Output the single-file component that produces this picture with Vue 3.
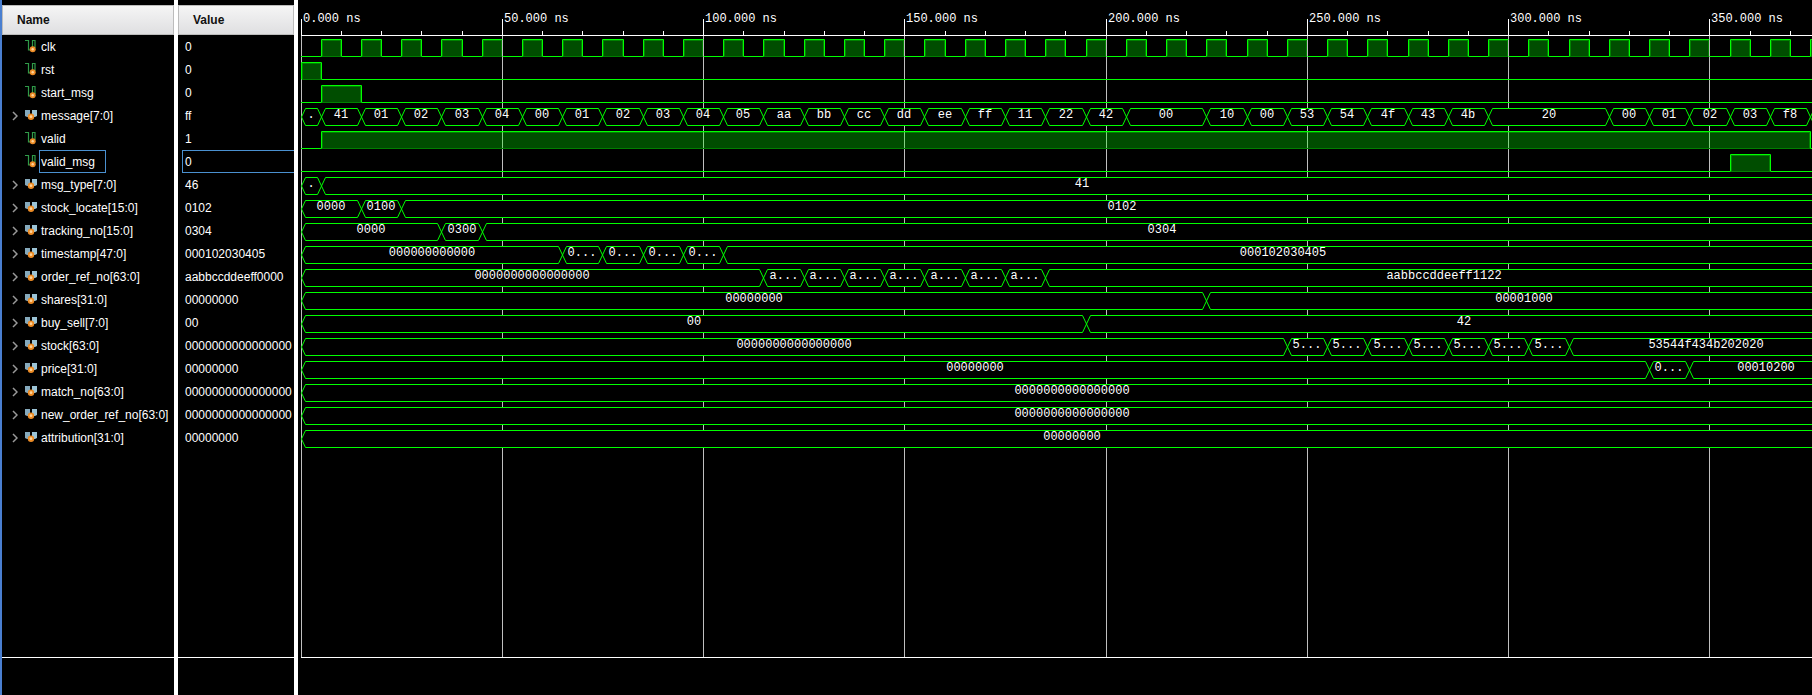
<script setup>
import { ref } from 'vue'

const PX_PER_NS = 4.0257
const ORIGIN = 3
const END = 383
const HIGH = 4
const LOW = 21

const xAt = (t) => ORIGIN + Math.floor(t * PX_PER_NS)

const clkPulses = Array.from({ length: 38 }, (_, i) => [5 + i * 10, 10 + i * 10])
const every10 = (start, labels) => labels.map((label, i) => [start + i * 10, label])

const signals = [
  { name: 'clk', value: '0', pulses: clkPulses },
  { name: 'rst', value: '0', pulses: [[0, 5]] },
  { name: 'start_msg', value: '0', pulses: [[5, 15]] },
  {
    name: 'message[7:0]',
    value: 'ff',
    bus: [
      [0, '.'],
      ...every10(5, ['41', '01', '02', '03', '04', '00', '01', '02', '03', '04', '05', 'aa', 'bb', 'cc', 'dd', 'ee', 'ff', '11', '22', '42']),
      [205, '00'],
      ...every10(225, ['10', '00', '53', '54', '4f', '43', '4b', '20']),
      ...every10(325, ['00', '01', '02', '03', 'f8', ''])
    ]
  },
  { name: 'valid', value: '1', pulses: [[5, 375]] },
  { name: 'valid_msg', value: '0', pulses: [[355, 365]] },
  { name: 'msg_type[7:0]', value: '46', bus: [[0, '.'], [5, '41']] },
  { name: 'stock_locate[15:0]', value: '0102', bus: [[0, '0000'], [15, '0100'], [25, '0102']] },
  { name: 'tracking_no[15:0]', value: '0304', bus: [[0, '0000'], [35, '0300'], [45, '0304']] },
  {
    name: 'timestamp[47:0]',
    value: '000102030405',
    bus: [[0, '000000000000'], ...every10(65, Array(4).fill('0...')), [105, '000102030405']]
  },
  {
    name: 'order_ref_no[63:0]',
    value: 'aabbccddeeff0000',
    bus: [[0, '0000000000000000'], ...every10(115, Array(7).fill('a...')), [185, 'aabbccddeeff1122']]
  },
  { name: 'shares[31:0]', value: '00000000', bus: [[0, '00000000'], [225, '00001000']] },
  { name: 'buy_sell[7:0]', value: '00', bus: [[0, '00'], [195, '42']] },
  {
    name: 'stock[63:0]',
    value: '0000000000000000',
    bus: [[0, '0000000000000000'], ...every10(245, Array(7).fill('5...')), [315, '53544f434b202020']]
  },
  { name: 'price[31:0]', value: '00000000', bus: [[0, '00000000'], [335, '0...'], [345, '00010200']] },
  { name: 'match_no[63:0]', value: '0000000000000000', bus: [[0, '0000000000000000']] },
  { name: 'new_order_ref_no[63:0]', value: '0000000000000000', bus: [[0, '0000000000000000']] },
  { name: 'attribution[31:0]', value: '00000000', bus: [[0, '00000000']] }
]

const selected = ref('valid_msg')

// Lines sit on pixel centres so that one-pixel strokes stay sharp.
const bitPath = (pulses) => {
  let d = ''
  let from = ORIGIN
  for (const [start, end] of pulses) {
    const a = xAt(start) + 0.5
    const b = xAt(end) + 0.5
    if (start > 0) d += `M${from} ${LOW}.5H${a}V${HIGH}.5`
    else d += `M${a} ${LOW}.5V${HIGH}.5`
    d += `H${b}`
    if (end % 50) d += `V${LOW}.5`
    from = b
  }
  return d + `M${from} ${LOW}.5H${xAt(END)}`
}

const pulseRects = (pulses) =>
  pulses.map(([start, end]) => ({ x: xAt(start) + 1, width: xAt(end) - xAt(start) - 1 }))

const busPath = (segments) => {
  const mid = (HIGH + LOW + 1) / 2
  return segments
    .map(([start], i) => {
      const a = xAt(start) + 0.5
      const b = xAt(segments[i + 1]?.[0] ?? END) + 0.5
      return (
        `M${a} ${mid}L${a + 4} ${HIGH}.5H${b - 4}L${b} ${mid}` +
        `M${a} ${mid}L${a + 4} ${LOW}.5H${b - 4}L${b} ${mid}`
      )
    })
    .join('')
}

const busLabels = (segments) =>
  segments.map(([start, text], i) => ({
    text,
    x: Math.round((xAt(start) + xAt(segments[i + 1]?.[0] ?? END)) / 2)
  }))

const majors = Array.from({ length: 8 }, (_, i) => i * 50)
const minors = Array.from({ length: 38 }, (_, i) => i * 10).filter((t) => t % 50)
</script>

<template>
  <main class="viewer">
    <section class="column names">
      <h2 class="head">Name</h2>
      <ul class="list">
        <li v-for="s in signals" :key="s.name" class="row" @click="selected = s.name">
          <button v-if="s.bus" class="expander" type="button" :aria-label="'Expand ' + s.name">
            <svg width="6" height="10" viewBox="0 0 6 10"><path d="M1 1L5 5L1 9" /></svg>
          </button>
          <span v-else class="expander"></span>
          <svg v-if="s.bus" class="icon" width="13" height="13" viewBox="0 0 13 13">
            <path d="M1 1h5v4L4 8H3L1 7z" fill="#86aabd" />
            <path d="M13 1H8v4l2 3h1l2-1z" fill="#9cc4d6" />
            <circle cx="7" cy="7.700" r="3.200" fill="#ec8b25" />
            <circle cx="7" cy="7.700" r="1.400" fill="#ffd49a" />
          </svg>
          <svg v-else class="icon" width="13" height="13" viewBox="0 0 13 13">
            <path d="M1 .500H4.500v9.500H8.500V.500h2.500V8" fill="none" stroke="#2f9a48" stroke-width="1.200" />
            <circle cx="8.700" cy="9.300" r="3" fill="#ec8b25" />
            <circle cx="8.700" cy="9.300" r="1.200" fill="#ffd49a" />
          </svg>
          <span class="label" :class="{ selected: selected === s.name }">{{ s.name }}</span>
        </li>
      </ul>
      <div class="foot"></div>
    </section>

    <section class="column values">
      <h2 class="head">Value</h2>
      <ul class="list">
        <li v-for="s in signals" :key="s.name" class="row">
          <span class="value" :class="{ selected: selected === s.name }">{{ s.value }}</span>
        </li>
      </ul>
      <div class="foot"></div>
    </section>

    <section class="column waves">
      <div class="plot">
        <svg class="grid">
          <line v-for="t in majors" :key="t" :x1="xAt(t) + 0.5" :x2="xAt(t) + 0.5" y1="36" y2="100%" />
        </svg>
        <svg class="ruler">
          <path :d="majors.map((t) => `M${xAt(t) + 0.5} 19V36`).join('')" />
          <path :d="minors.map((t) => `M${xAt(t) + 0.5} 31V36`).join('')" />
          <line :x1="ORIGIN" x2="100%" y1="35.5" y2="35.5" />
          <text v-for="t in majors" :key="t" :x="xAt(t) + 2" y="22">{{ t.toFixed(3) }} ns</text>
        </svg>
        <svg v-for="s in signals" :key="s.name" class="wave">
          <template v-if="s.bus">
            <rect class="mask" :x="ORIGIN + 1" :y="HIGH" :width="xAt(END)" :height="LOW - HIGH + 1" />
            <path class="trace" :d="busPath(s.bus)" />
            <text v-for="(l, i) in busLabels(s.bus)" :key="i" :x="l.x" y="14" text-anchor="middle">{{ l.text }}</text>
          </template>
          <template v-else>
            <g v-for="(r, i) in pulseRects(s.pulses)" :key="i">
              <rect class="fill" :x="r.x" :y="HIGH + 1" :width="r.width" :height="LOW - HIGH" />
              <rect class="inner" :x="r.x + 0.5" :y="HIGH + 1.5" :width="r.width - 1" :height="LOW - HIGH - 1" />
            </g>
            <path class="trace" :d="bitPath(s.pulses)" />
            <path
              v-for="(r, i) in pulseRects(s.pulses)"
              :key="'base' + i"
              class="base"
              :d="`M${r.x} ${LOW}.5h${r.width}`"
            />
          </template>
        </svg>
      </div>
      <div class="foot"></div>
    </section>
  </main>
</template>

<style>
body {
  background: #000;
}
</style>

<style scoped>
.viewer {
  display: grid;
  grid-template-columns: 176px 120px minmax(0, 1fr);
  min-height: 100vh;
  box-sizing: border-box;
  border-left: 2px solid #4a7fd0;
  background: #000;
  color: #fff;
  font: 12px/22px "Liberation Sans", Arial, sans-serif;
}
.column {
  display: flex;
  flex-direction: column;
  min-width: 0;
  overflow: hidden;
}
.names,
.values {
  border-right: 4px solid #fff;
}
.head {
  height: 30px;
  margin: 5px 0 0;
  padding: 0 14px;
  box-sizing: border-box;
  border: 1px solid #bcbcbc;
  background: linear-gradient(#f5f5f5, #dfdfe1);
  color: #111;
  font-size: 12px;
  font-weight: bold;
  line-height: 29px;
}
.list {
  flex: 1;
  margin: 0;
  padding: 0;
  list-style: none;
}
.row {
  display: flex;
  align-items: center;
  height: 23px;
  white-space: nowrap;
}
.expander {
  display: flex;
  align-items: center;
  width: 22px;
  height: 22px;
  flex: none;
  padding: 0 0 0 10px;
  box-sizing: border-box;
  border: 0;
  background: none;
}
.expander path {
  fill: none;
  stroke: #999;
  stroke-width: 1.5;
}
.icon {
  flex: none;
  margin-right: 2px;
}
.label {
  height: 23px;
  box-sizing: border-box;
  padding: 0 10px 0 1px;
  border: 1px solid transparent;
}
.value {
  flex: 1;
  height: 23px;
  box-sizing: border-box;
  margin-left: 4px;
  padding-left: 2px;
  border: 1px solid transparent;
  border-right: 0;
  overflow: hidden;
}
.label,
.value {
  line-height: 22px;
}
.label.selected,
.value.selected {
  border-color: #4a90d0;
}
.foot {
  height: 37px;
  border-top: 1px solid #fff;
  flex: none;
}
.waves .foot {
  margin-left: 3px;
}
.plot {
  position: relative;
  display: flex;
  flex-direction: column;
  flex: 1;
}
.grid {
  position: absolute;
  inset: 0;
  width: 100%;
  height: 100%;
}
.grid line {
  stroke: #bfbfbf;
}
.ruler,
.wave {
  position: relative;
  display: block;
  width: 100%;
  flex: none;
}
.ruler {
  height: 35px;
  overflow: visible;
}
.ruler path,
.ruler line {
  fill: none;
  stroke: #fff;
}
.wave {
  height: 23px;
}
.ruler text,
.wave text {
  fill: #fff;
  font: 12px "Liberation Mono", "Courier New", monospace;
}
.mask {
  fill: #000;
}
.trace {
  fill: none;
  stroke: #0f0;
}
.fill {
  fill: #0f0;
  fill-opacity: 0.3;
}
.inner {
  fill: none;
  stroke: #0f0;
  stroke-opacity: 0.3;
}
.base {
  fill: none;
  stroke: #007f00;
}
</style>
